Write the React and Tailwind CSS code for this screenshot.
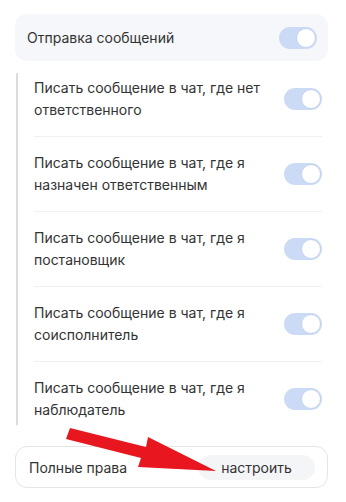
import React from "react";

function Toggle() {
  return (
    <div className="relative h-[22px] w-[38px] shrink-0 rounded-full bg-[#cbdbf5]">
      <div className="absolute right-[1px] top-[1px] h-[20px] w-[20px] rounded-full border border-[#c3d3ee] bg-white" />
    </div>
  );
}

const rows = [
  ["Писать сообщение в чат, где нет", "ответственного"],
  ["Писать сообщение в чат, где я", "назначен ответственным"],
  ["Писать сообщение в чат, где я", "постановщик"],
  ["Писать сообщение в чат, где я", "соисполнитель"],
  ["Писать сообщение в чат, где я", "наблюдатель"],
];

export default function App() {
  return (
    <div
      className="relative h-[502px] w-[346px] bg-white pl-[15px] pt-[14px] text-[14px] text-[#333333]"
      style={{ fontFamily: "Inter, 'Noto Sans', sans-serif" }}
    >
      <div className="flex h-[47px] w-[313px] items-center justify-between rounded-[12px] bg-[#f5f7fa] pl-[12px] pr-[11px]">
        <span>Отправка сообщений</span>
        <Toggle />
      </div>

      <div className="ml-[1px] mt-[12px] w-[306px] border-l-2 border-[#dcdcdc] pl-[16px]">
        {rows.map((r, i) => (
          <div
            key={i}
            className={
              "flex items-center justify-between leading-[22px] " +
              (i === 0 ? "pt-[4px] " : "pt-[15px] ") +
              (i === rows.length - 1 ? "pb-[4px]" : "pb-[15px] border-b border-[#f1f1f3]")
            }
          >
            <div>
              <div>{r[0]}</div>
              <div>{r[1]}</div>
            </div>
            <Toggle />
          </div>
        ))}
      </div>

      <div className="mt-[21px] flex h-[42px] w-[313px] items-center justify-between rounded-[12px] border border-[#e3e5e9] bg-white pl-[13px] pr-[12px]">
        <span>Полные права</span>
        <div className="flex h-[25px] w-[117px] items-center justify-center rounded-full bg-[#f4f5f7]">
          настроить
        </div>
      </div>

      <svg
        className="pointer-events-none absolute left-0 top-0"
        width="346"
        height="502"
        viewBox="0 0 346 502"
      >
        <polygon
          points="70,428 146,447 148,437 216,471 138,467 141,458 66,439"
          fill="#e8161f"
        />
      </svg>
    </div>
  );
}
